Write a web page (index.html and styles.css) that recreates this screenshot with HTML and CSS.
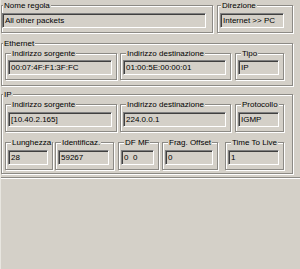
FILE: index.html
```html
<!DOCTYPE html>
<html lang="it">
<head>
  <meta charset="UTF-8" />
  <title>Regola firewall</title>
  <link rel="stylesheet" href="styles.css">
</head>
<body>

<div class="panel">

  <div class="row head">
    <fieldset class="grp rule">
      <legend>Nome regola</legend>
      <div class="field">All other packets</div>
    </fieldset>
    <fieldset class="grp dir">
      <legend>Direzione</legend>
      <div class="field">Internet &gt;&gt; PC</div>
    </fieldset>
  </div>

  <fieldset class="grp sect eth">
    <legend>Ethernet</legend>
    <div class="row">
      <fieldset class="sub w-src">
        <legend>Indirizzo sorgente</legend>
        <div class="field">00:07:4F:F1:3F:FC</div>
      </fieldset>
      <fieldset class="sub w-dst">
        <legend>Indirizzo destinazione</legend>
        <div class="field">01:00:5E:00:00:01</div>
      </fieldset>
      <fieldset class="sub w-type">
        <legend>Tipo</legend>
        <div class="field">IP</div>
      </fieldset>
    </div>
  </fieldset>

  <fieldset class="grp sect ip">
    <legend>IP</legend>
    <div class="row">
      <fieldset class="sub w-src">
        <legend>Indirizzo sorgente</legend>
        <div class="field">[10.40.2.165]</div>
      </fieldset>
      <fieldset class="sub w-dst">
        <legend>Indirizzo destinazione</legend>
        <div class="field">224.0.0.1</div>
      </fieldset>
      <fieldset class="sub w-type">
        <legend>Protocollo</legend>
        <div class="field">IGMP</div>
      </fieldset>
    </div>
    <div class="row second">
      <fieldset class="sub w-len">
        <legend>Lunghezza</legend>
        <div class="field">28</div>
      </fieldset>
      <fieldset class="sub w-id">
        <legend>Identificaz.</legend>
        <div class="field">59267</div>
      </fieldset>
      <fieldset class="sub w-flags">
        <legend>DF MF</legend>
        <div class="field">0&nbsp;&nbsp;0</div>
      </fieldset>
      <fieldset class="sub w-frag">
        <legend>Frag. Offset</legend>
        <div class="field">0</div>
      </fieldset>
      <fieldset class="sub w-ttl">
        <legend>Time To Live</legend>
        <div class="field">1</div>
      </fieldset>
    </div>
  </fieldset>

  <div class="separator"></div>

</div>

</body>
</html>
```

FILE: styles.css
```css
* {
  box-sizing: border-box;
}
body {
  margin: 0;
  background: #d4d0c8;
  font-family: "Liberation Sans", Arial, sans-serif;
  font-size: 8px;
  color: #000;
}
.panel {
  width: 300px;
  height: 269px;
  border-left: 1px solid #e8e6e0;
}
.row {
  display: flex;
}
fieldset {
  margin: 0;
  min-width: 0;
  border: 1px solid #8c8a85;
  box-shadow: 1px 1px 0 #fff, inset 1px 1px 0 #fff;
}
legend {
  padding: 0 1px;
  line-height: 9px;
  white-space: nowrap;
  background: #d4d0c8;
}

/* top row */
.head {
  padding-top: 1px;
}
.grp legend {
  margin-left: 1px;
}
.rule {
  width: 212px;
  padding: 3px 6px 4px 0;
}
.dir {
  width: 76px;
  margin-left: 4px;
  padding: 3px 8px 4px 2px;
}

/* Ethernet / IP sections */
.sect {
  width: 292px;
  padding: 1px 8px 5px 3px;
}
.sect > legend {
  margin-left: -2px;
}
.eth {
  margin-top: 6px;
}
.ip {
  margin-top: 4px;
  padding-bottom: 3px;
}
.sub {
  padding: 2px 4px 4px 2px;
}
.sub legend {
  margin-left: 3px;
}
.ip .sub {
  padding-top: 3px;
}
.second {
  margin-top: 6px;
}
.w-src { width: 112px; }
.w-dst { width: 111px; margin-left: 3px; }
.w-type { width: 49px; margin-left: 4px; }
.w-len { width: 48px; }
.w-id { width: 59px; margin-left: 2px; }
.w-flags { width: 41px; margin-left: 4px; }
.w-frag { width: 56px; margin-left: 3px; }
.w-ttl { width: 59px; margin-left: 7px; }

/* read-only text box */
.field {
  height: 15px;
  padding-left: 2px;
  line-height: 13px;
  border: 1px solid;
  border-color: #808080 #fff #fff #808080;
  box-shadow: inset 1px 1px 0 #404040;
  white-space: nowrap;
  overflow: hidden;
}

.separator {
  margin-top: 3px;
  border-top: 1px solid #8c8a85;
  border-bottom: 1px solid #fff;
}
```
